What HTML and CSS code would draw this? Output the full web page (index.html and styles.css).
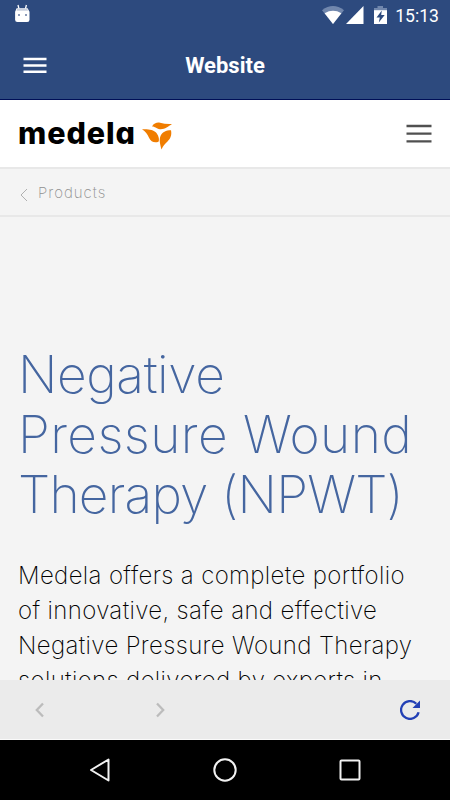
FILE: index.html
```html
<!DOCTYPE html>
<html lang="en">

<head>
  <meta charset="UTF-8">
  <meta name="viewport" content="width=device-width, initial-scale=1.0">
  <title>Website</title>
  <link rel="stylesheet" href="styles.css">
</head>

<body>
  <header class="app_header">
    <div class="status_bar">
      <svg class="ico_debug" width="16" height="19" viewBox="0 0 16 19">
        <path d="M4 1l1 4M12.400 1l-1 4" stroke="#fff" stroke-width="1.300" />
        <path d="M2.600 4.200h11l1.900 3.500v8q0 2.300-2.300 2.300H3.400q-2.300 0-2.300-2.300v-8z" fill="#fff" />
        <path d="M3.500 4.500h9.500l1 2.200h-11.500z" fill="#c8cfdd" />
        <path d="M4 10h2v2H4zM11 10h2v2h-2z" fill="#8c9bb9" />
      </svg>
      <div class="status_icons">
        <svg class="ico_wifi" width="22" height="18" viewBox="0 0 22 18">
          <path d="M0 4.200Q11-4.200 22 4.200L11 18z" fill="#7187ad" />
          <path d="M2.600 7.200Q11 2.400 19.400 7.200L11 18z" fill="#fff" />
        </svg>
        <svg class="ico_signal" width="18" height="18" viewBox="0 0 18 18">
          <path d="M0 18L17.500 0v18z" fill="#fff" />
        </svg>
        <svg class="ico_battery" width="13" height="18" viewBox="0 0 13 18">
          <path d="M0 2h3.500V0h5.500v2H13v4H0z" fill="#7187ad" />
          <path d="M0 4.200h13V18H0z" fill="#fff" />
          <path d="M7.800 4.500L2.500 11.500h3.300l-1 5L10.700 9H7.200z" fill="#2d4a7e" />
        </svg>
        <span class="time">15:13</span>
      </div>
    </div>
    <div class="title_bar">
      <svg class="ico_menu" width="24" height="18" viewBox="0 0 24 18">
        <path d="M.5 2h23M.5 8.500h23M.5 14.700h23" stroke="#fff" stroke-width="2.400" />
      </svg>
      <h1>Website</h1>
    </div>
  </header>

  <main>
    <div class="site_header">
      <div class="logo">
        <span>medela</span>
        <svg width="30" height="28" viewBox="0 0 30 28">
          <g fill="#f07d00">
            <path d="M10 4.500C12 1 15 .2 18 .7q5.500 1.700 12 1.300C26 4.500 23 7.500 18 7.200 14 6.500 13 4.500 10 4.500z" />
            <path d="M0 7.300C6 7 11.500 7.500 14.500 11c2.500 3.500 3 7 2 8.800C12.500 21.200 9 20 7 15.800 5.500 12 3.500 9.500 0 7.300z" />
            <path d="M29 8.200c1 5-.5 8.200-3.500 11.200-2.500 2.300-4.500 4.500-6 8C18 22 17 18 18.500 14 20 10 24 8.200 29 8.200z" />
          </g>
        </svg>
      </div>
      <svg class="ico_site_menu" width="26" height="20" viewBox="0 0 26 20">
        <path d="M.5 2h25M.5 9.700h25M.5 17.300h25" stroke="#505050" stroke-width="2.300" />
      </svg>
    </div>

    <nav class="breadcrumb">
      <svg width="8" height="14" viewBox="0 0 8 14">
        <path d="M7 1L1 7l6 6" fill="none" stroke="#b0b0b0" />
      </svg>
      <span>Products</span>
    </nav>

    <article class="content">
      <h2>
        <span class="line_1">Negative</span>
        <span class="line_2">Pressure Wound</span>
        <span class="line_3">Therapy (NPWT)</span>
      </h2>
      <p>Medela offers a complete portfolio<br>of innovative, safe and effective<br>Negative Pressure Wound Therapy<br>solutions delivered by experts in</p>
    </article>
  </main>

  <div class="toolbar">
    <svg class="ico_back" width="10" height="16" viewBox="0 0 10 16">
      <path d="M8 1.500L1.800 8 8 14.500" fill="none" stroke="#bcbcbc" stroke-width="2.300" />
    </svg>
    <svg class="ico_forward" width="10" height="16" viewBox="0 0 10 16">
      <path d="M2 1.500L8.200 8 2 14.500" fill="none" stroke="#bcbcbc" stroke-width="2.300" />
    </svg>
    <svg class="ico_reload" width="20" height="20" viewBox="0 0 20 20">
      <path d="M18.600 12.300A8.900 8.900 0 1 1 16.300 3.700" fill="none" stroke="#2340b5" stroke-width="2.300" />
      <path d="M20 .5V8h-7.500z" fill="#2340b5" />
    </svg>
  </div>

  <footer class="nav_bar">
    <svg width="24" height="24" viewBox="0 0 24 24">
      <path d="M20.500 1.500v21L3 12z" fill="none" stroke="#f2f2f2" stroke-width="2" stroke-linejoin="round" />
    </svg>
    <svg width="24" height="24" viewBox="0 0 24 24">
      <circle cx="12" cy="12" r="10.700" fill="none" stroke="#f2f2f2" stroke-width="2" />
    </svg>
    <svg width="24" height="24" viewBox="0 0 24 24">
      <rect x="2.500" y="2.500" width="19" height="19" rx="1" fill="none" stroke="#f2f2f2" stroke-width="2" />
    </svg>
  </footer>
</body>

</html>
```
FILE: styles.css
```css
* {
  box-sizing: border-box;
  margin: 0;
}

body {
  display: flex;
  flex-direction: column;
  height: 800px;
  overflow: hidden;
  background: #f4f4f4;
  font-family: Inter, "Liberation Sans", sans-serif;
}

svg {
  display: block;
  flex-shrink: 0;
}

.app_header {
  height: 100px;
  flex-shrink: 0;
  background: #2d4a7e;
  border-bottom: 1px solid #000f57;
  color: white;
  font-family: Roboto, sans-serif;
}

.status_bar {
  display: flex;
  justify-content: space-between;
  height: 32px;
  padding: 4px 11px 0 14px;
}

.status_icons {
  display: flex;
  padding-top: 2px;
}

.ico_signal {
  margin-left: 2px;
}

.ico_battery {
  margin-left: 10px;
}

.time {
  margin-left: 8px;
  font-size: 17.600px;
  font-weight: 450;
  line-height: 20px;
}

.title_bar {
  display: grid;
  grid-template-columns: 24px 1fr 24px;
  align-items: center;
  height: 67px;
  padding: 0 23px;
}

.title_bar h1 {
  font-size: 22px;
  font-weight: 700;
  text-align: center;
}

main {
  flex: 1;
  min-height: 0;
  overflow: hidden;
}

.site_header {
  display: flex;
  justify-content: space-between;
  align-items: center;
  height: 67px;
  padding: 0 18px;
  background: white;
}

.logo {
  display: flex;
  align-items: center;
  gap: 6px;
}

.logo span {
  margin-top: -1px;
  font-size: 30.500px;
  font-weight: 800;
  line-height: 36px;
  letter-spacing: 0.900px;
  font-feature-settings: "cv11";
}

.logo svg {
  margin-top: 5px;
}

.breadcrumb {
  display: flex;
  align-items: center;
  gap: 10px;
  height: 50px;
  padding: 0 20px;
  border-top: 2px solid #e8e8e8;
  border-bottom: 2px solid #e8e8e8;
  color: #909090;
  font-size: 15px;
  font-weight: 200;
  letter-spacing: 1px;
}

.breadcrumb svg {
  margin-top: 5px;
}

.content {
  padding: 127px 18px 0;
}

.content h2 {
  color: #4566a0;
  font-size: 51.500px;
  font-weight: 150;
  line-height: 60px;
  white-space: nowrap;
}

.content h2 span {
  display: block;
}

.line_1 {
  letter-spacing: -0.400px;
}

.line_2 {
  letter-spacing: 0.400px;
}

.line_3 {
  letter-spacing: -0.800px;
}

.content p {
  margin-top: 34px;
  color: #000;
  font-size: 24px;
  font-weight: 150;
  line-height: 35px;
  letter-spacing: 0.360px;
  white-space: nowrap;
}

.toolbar {
  display: flex;
  align-items: center;
  height: 60px;
  flex-shrink: 0;
  padding: 0 30px 0 35px;
  background: #ebebeb;
  border-bottom: 1px solid #fafafa;
}

.ico_forward {
  margin-left: 110px;
}

.ico_reload {
  margin-left: auto;
}

.nav_bar {
  display: flex;
  justify-content: center;
  align-items: center;
  gap: 101px;
  height: 60px;
  flex-shrink: 0;
  background: #000;
}
```
